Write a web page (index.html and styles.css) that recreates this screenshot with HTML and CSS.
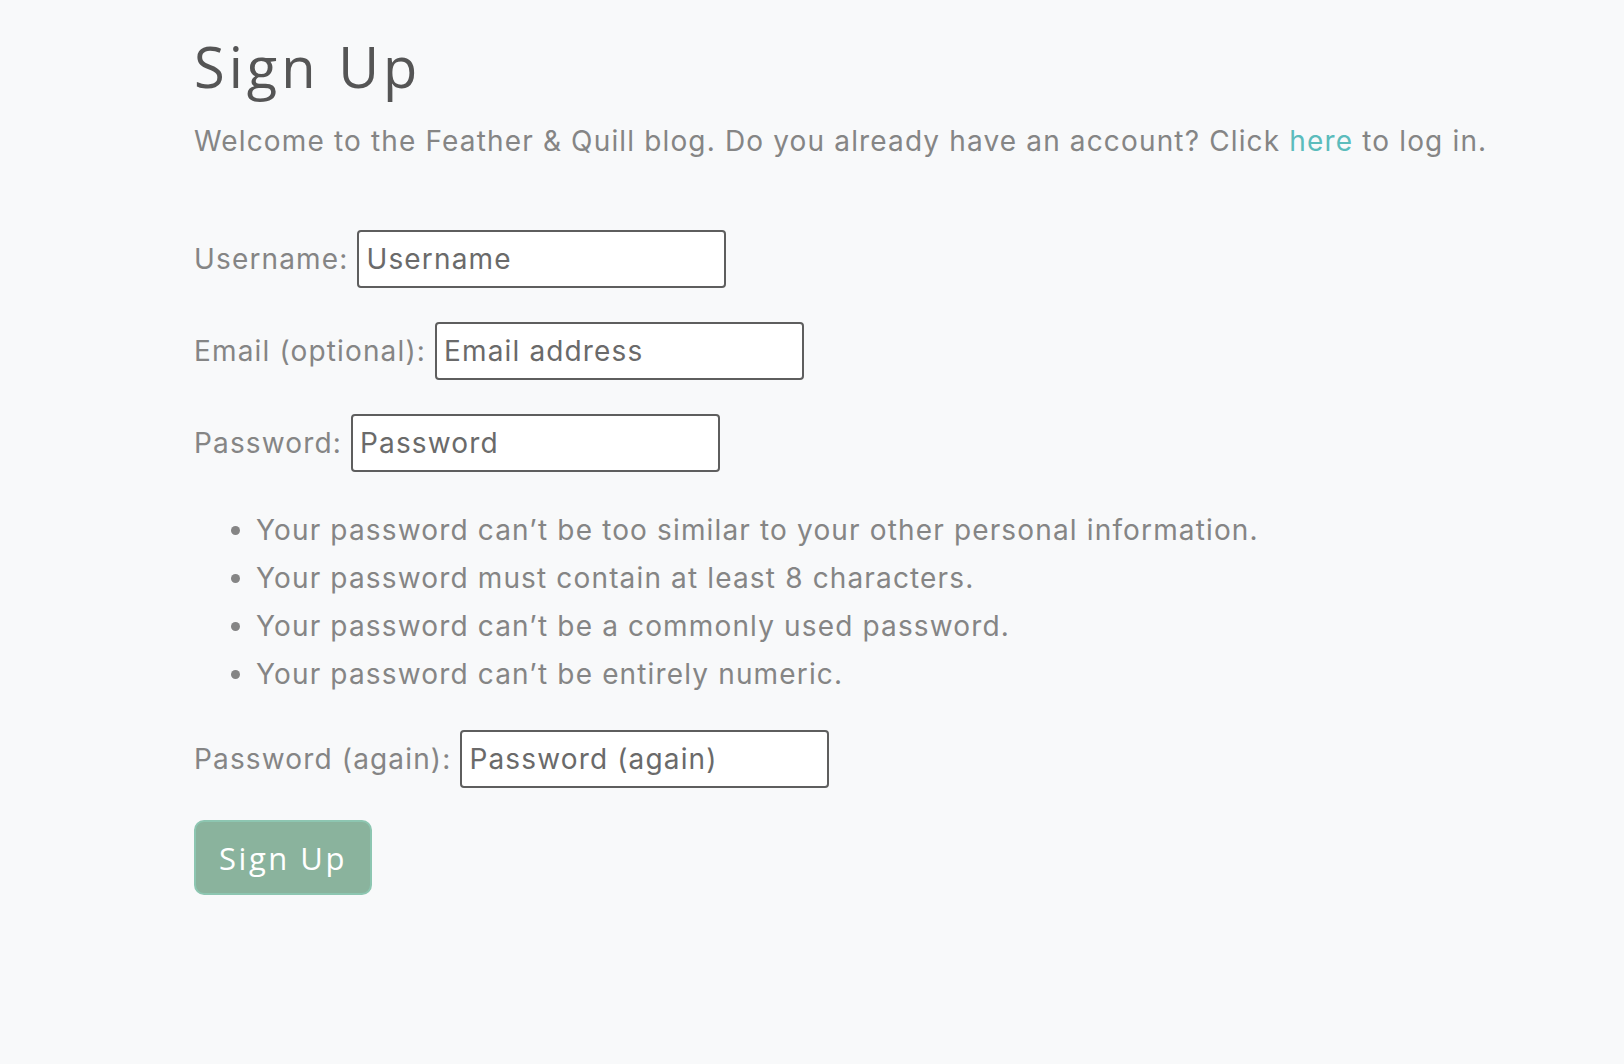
FILE: index.html
```html
<!DOCTYPE html>
<html lang="en">
<head>
<meta charset="utf-8">
<title>Sign Up</title>
<link rel="stylesheet" href="styles.css">
</head>
<body>
<main class="page">
  <h1 class="title">Sign Up</h1>
  <p class="intro">Welcome to the Feather &amp; Quill blog. Do you already have an account? Click <a class="link" href="#">here</a> to log in.</p>
  <form class="form">
    <div class="row">
      <label class="label" for="u">Username:</label>
      <input class="field" id="u" type="text" placeholder="Username">
    </div>
    <div class="row">
      <label class="label" for="e">Email (optional):</label>
      <input class="field" id="e" type="text" placeholder="Email address">
    </div>
    <div class="row">
      <label class="label" for="p">Password:</label>
      <input class="field" id="p" type="text" placeholder="Password">
    </div>
    <ul class="rules">
      <li>Your password can’t be too similar to your other personal information.</li>
      <li>Your password must contain at least 8 characters.</li>
      <li>Your password can’t be a commonly used password.</li>
      <li>Your password can’t be entirely numeric.</li>
    </ul>
    <div class="row">
      <label class="label" for="p2">Password (again):</label>
      <input class="field" id="p2" type="text" placeholder="Password (again)">
    </div>
    <button class="btn" type="button">Sign Up</button>
  </form>
</main>
</body>
</html>
```
FILE: styles.css
```css
html, body {
  margin: 0;
  padding: 0;
  background: #f8f9fa;
}
body {
  font-family: Inter, "Liberation Sans", Arial, sans-serif;
  color: #858585;
  letter-spacing: 1.15px;
}
.page {
  padding: 32px 0 0 194px;
}
.title {
  margin: 0;
  font-family: "Open Sans", "DejaVu Sans", sans-serif;
  font-weight: 500;
  font-size: 56px;
  line-height: 68px;
  letter-spacing: 4px;
  color: #555555;
}
.intro {
  margin: 23px 0 0 0;
  font-size: 28px;
  line-height: 36px;
  color: #858585;
}
.link {
  color: #5bbcbc;
  text-decoration: none;
}
.form {
  margin-top: 71px;
}
.row {
  display: flex;
  align-items: center;
  gap: 9px;
  height: 58px;
  margin-bottom: 34px;
}
.label {
  font-size: 28px;
  color: #858585;
}
.field {
  box-sizing: border-box;
  width: 369px;
  height: 58px;
  margin: 0;
  padding: 0 7px;
  border: 2px solid #5e5e5e;
  border-radius: 4px;
  background: #ffffff;
  font-family: inherit;
  font-size: 28px;
  letter-spacing: inherit;
  color: #555;
}
.field::placeholder {
  color: #6a6a6a;
  opacity: 1;
}
.rules {
  margin: 4px 0 32px 0;
  padding-left: 62px;
  font-size: 28px;
  line-height: 48px;
  color: #858585;
}
.btn {
  box-sizing: border-box;
  width: 178px;
  height: 75px;
  margin-top: -2px;
  background: #8ab39d;
  border: 2px solid #8dc6b1;
  border-radius: 10px;
  color: #ffffff;
  font-family: "Open Sans", "DejaVu Sans", sans-serif;
  font-size: 31px;
  letter-spacing: 2.5px;
  cursor: pointer;
}
```
